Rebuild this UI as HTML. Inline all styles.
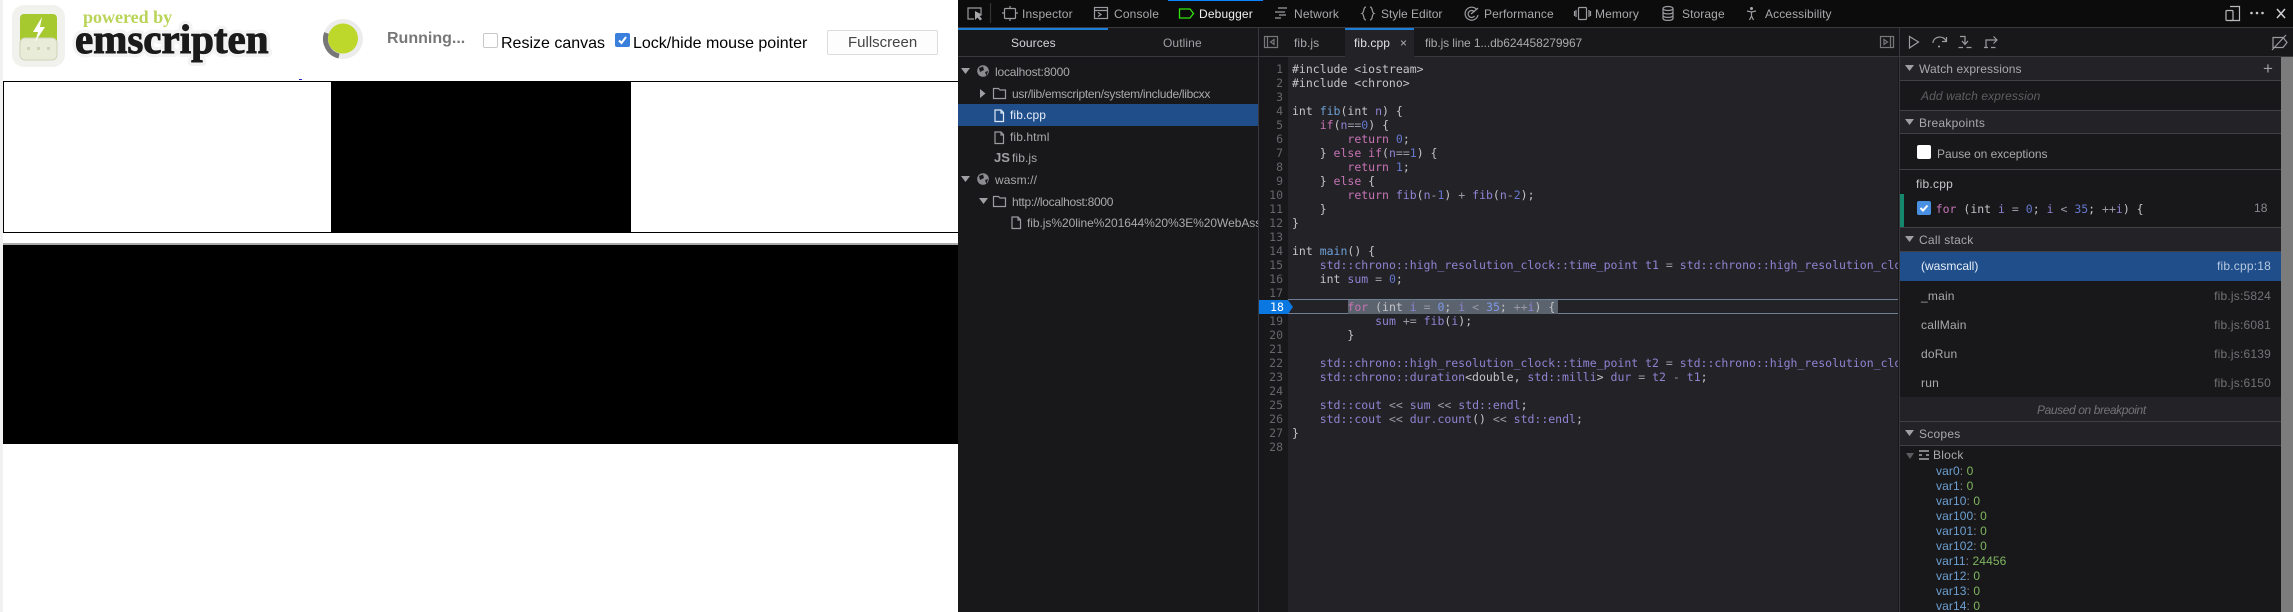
<!DOCTYPE html>
<html><head><meta charset="utf-8"><style>
html,body{margin:0;padding:0;width:2293px;height:612px;overflow:hidden;background:#fff}
body{position:relative;font-family:"Liberation Sans",sans-serif;filter:blur(.3px)}
.b{position:absolute}
.t{position:absolute;white-space:pre;font-size:12px;line-height:16px;color:#a9a9ac;letter-spacing:.1px}
.m{font-family:"DejaVu Sans Mono","Liberation Mono",monospace;font-size:11.5px}
#code{position:absolute;left:1292px;top:62px;width:606px;height:550px;overflow:hidden}
#code div{height:14px;line-height:14px;white-space:pre;font-family:"DejaVu Sans Mono","Liberation Mono",monospace;font-size:11.5px;color:#c4c4c8}
#nums{position:absolute;left:1259px;top:62px;width:24px;text-align:right;color:#66666b}
#nums div{height:14px;line-height:14px;font-family:"DejaVu Sans Mono","Liberation Mono",monospace;font-size:11.5px}
.k{color:#c673b4}.v{color:#8f83d2}.n{color:#6476cc}.o{color:#9a9aa6}.f{color:#6f9fd6}.c{color:#858589}
.vn{color:#6d9fd0}.vv{color:#7fb560}
</style></head><body>
<!-- left page -->
<div class="b" style="left:0;top:0;width:3px;height:612px;background:#f1f1f1"></div>
<div class="b" style="left:3px;top:81px;width:955px;height:152px;box-sizing:border-box;border:1px solid #000;border-right:0;background:#fff"></div>
<div class="b" style="left:331px;top:81px;width:300px;height:151px;background:#000"></div>
<div class="b" style="left:3px;top:243px;width:955px;height:2px;background:#aaa"></div>
<div class="b" style="left:3px;top:245px;width:955px;height:199px;background:#000"></div>
<div class="b" style="left:299px;top:79px;width:3px;height:1px;background:#22c"></div>
<svg class="b" style="left:0;top:0" width="958" height="80" viewBox="0 0 958 80">
<rect x="12" y="5" width="53" height="62" rx="12" fill="#f1f1ee"/>
<rect x="20" y="14" width="37" height="32" rx="4" fill="#a6c92f"/>
<rect x="20" y="38" width="37" height="22" rx="5" fill="#e9ecd8" stroke="#cfd4b8"/>
<path d="M27 47h3v3h-3zM37 47h3v3h-3zM47 47h3v3h-3z" fill="#cfd4b8"/>
<path d="M42 17 L33 32 L38 32 L35 42 L45 27 L40 27 Z" fill="#fff"/>
<text aria-hidden="true" x="75" y="53" font-family="Liberation Serif" font-weight="bold" font-size="41" fill="#f3f3f3" stroke="#f3f3f3" stroke-width="8" stroke-linejoin="round">emscripten</text>
<text x="75" y="53" font-family="Liberation Serif" font-weight="bold" font-size="41" fill="#1a1a1a" stroke="#1a1a1a" stroke-width="1">emscripten</text>
<text x="83" y="23" font-family="Liberation Serif" font-weight="bold" font-size="18" fill="#b9d458">powered by</text>
<circle cx="343" cy="39" r="20" fill="#ececec"/>
<path d="M326.500 33 A17.500 17.500 0 0 0 339 56" fill="none" stroke="#777" stroke-width="5"/>
<circle cx="343" cy="38.500" r="15" fill="#bdd82a"/>
</svg>
<div class="t" style="left:387px;top:29px;font-size:16px;line-height:20px;font-weight:bold;color:#787878;letter-spacing:0">Running...</div>
<div class="b" style="left:483px;top:33px;width:13px;height:13px;border:1px solid #c8c8c8;border-radius:2px;background:#fff"></div>
<div class="t" style="left:501px;top:34px;font-size:16px;line-height:20px;color:#000;letter-spacing:0">Resize canvas</div>
<svg class="b" style="left:615px;top:33px" width="15" height="14"><rect width="15" height="14" rx="2" fill="#3b7fdd"/><path d="M4 7.500l2.500 2.500 4.500-6" fill="none" stroke="#fff" stroke-width="2"/></svg>
<div class="t" style="left:633px;top:34px;font-size:16px;line-height:20px;color:#000;letter-spacing:0">Lock/hide mouse pointer</div>
<div class="b" style="left:827px;top:30px;width:109px;height:23px;border:1px solid #dcdcdc;border-radius:2px;background:#fdfdfd"></div>
<div class="t" style="left:848px;top:33px;font-size:15px;line-height:20px;color:#444;letter-spacing:0">Fullscreen</div>

<!-- devtools -->
<div class="b" style="left:958px;top:0;width:1335px;height:612px;background:#18181a"></div>
<div class="b" style="left:958px;top:0;width:1335px;height:27px;background:#0c0c0d;border-bottom:1px solid #38383d;box-sizing:content-box"></div>
<div class="b" style="left:1168px;top:0;width:95px;height:1px;background:#0a84ff"></div>
<div class="b" style="left:958px;top:28px;width:150px;height:2px;background:#1c7ed6"></div>
<div class="b" style="left:958px;top:56px;width:1335px;height:1px;background:#38383d"></div>
<div class="b" style="left:1258px;top:28px;width:1px;height:584px;background:#38383d"></div>
<div class="b" style="left:1899px;top:28px;width:1px;height:584px;background:#38383d"></div>
<!-- editor -->
<div class="b" style="left:1288px;top:57px;width:610px;height:555px;background:#232327"></div>
<div class="b" style="left:1345px;top:28px;width:69px;height:29px;background:#232327"></div>
<div class="b" style="left:1345px;top:28px;width:69px;height:2px;background:#1c7ed6"></div>
<!-- sidebar select -->
<div class="b" style="left:958px;top:104px;width:300px;height:22px;background:#204e8a"></div>
<!-- line 18 -->
<div class="b" style="left:1288px;top:299px;width:610px;height:15px;border-top:1px solid #6f7f96;border-bottom:1px solid #6f7f96;box-sizing:border-box"></div>
<div class="b" style="left:1348px;top:300px;width:210px;height:14px;background:#5b636e"></div>
<!-- right panel sections -->
<div class="b" style="left:1900px;top:57px;width:381px;height:23px;background:#232327"></div>
<div class="b" style="left:1900px;top:80px;width:381px;height:1px;background:#404045"></div>
<div class="b" style="left:1900px;top:110px;width:381px;height:24px;background:#232327;border-top:1px solid #404045;border-bottom:1px solid #404045;box-sizing:border-box"></div>
<div class="b" style="left:1900px;top:169px;width:381px;height:1px;background:#404045"></div>
<div class="b" style="left:1900px;top:194px;width:4px;height:33px;background:#14886c"></div>
<div class="b" style="left:1900px;top:227px;width:381px;height:25px;background:#232327;border-top:1px solid #404045;border-bottom:1px solid #404045;box-sizing:border-box"></div>
<div class="b" style="left:1900px;top:252px;width:381px;height:29px;background:#204e8a"></div>
<div class="b" style="left:1900px;top:397px;width:381px;height:24px;background:#232327"></div>
<div class="b" style="left:1900px;top:421px;width:381px;height:25px;background:#232327;border-top:1px solid #404045;border-bottom:1px solid #404045;box-sizing:border-box"></div>
<div class="b" style="left:2281px;top:57px;width:12px;height:555px;background:#7c7c7c"></div>

<!-- toolbar text -->
<div class="t" style="left:1022px;top:6px;letter-spacing:.15px">Inspector</div>
<div class="t" style="left:1114px;top:6px;letter-spacing:.15px">Console</div>
<div class="t" style="left:1199px;top:6px;color:#f0f0f2;letter-spacing:.15px">Debugger</div>
<div class="t" style="left:1294px;top:6px;letter-spacing:.15px">Network</div>
<div class="t" style="left:1381px;top:6px;letter-spacing:0">Style Editor</div>
<div class="t" style="left:1484px;top:6px;letter-spacing:.1px">Performance</div>
<div class="t" style="left:1595px;top:6px;letter-spacing:.1px">Memory</div>
<div class="t" style="left:1682px;top:6px;letter-spacing:.1px">Storage</div>
<div class="t" style="left:1765px;top:6px;letter-spacing:.1px">Accessibility</div>
<div class="t" style="left:1011px;top:35px;color:#d7d7db">Sources</div>
<div class="t" style="left:1163px;top:35px;color:#a0a0a4">Outline</div>
<div class="t" style="left:1294px;top:35px">fib.js</div>
<div class="t" style="left:1354px;top:35px;color:#e0e0e4">fib.cpp</div>
<div class="t" style="left:1400px;top:35px;color:#b1b1b3">×</div>
<div class="t" style="left:1425px;top:35px;letter-spacing:-.1px">fib.js line 1...db624458279967</div>

<!-- tree -->
<div class="t" style="left:995px;top:64px;letter-spacing:-.2px">localhost:8000</div>
<div class="t" style="left:1012px;top:86px;letter-spacing:-.3px">usr/lib/emscripten/system/include/libcxx</div>
<div class="t" style="left:1010px;top:107px;color:#e6eef8">fib.cpp</div>
<div class="t" style="left:1010px;top:129px">fib.html</div>
<div class="t" style="left:994px;top:150px;font-weight:bold;font-size:13px;letter-spacing:0;color:#a0a0a4">JS</div>
<div class="t" style="left:1012px;top:150px">fib.js</div>
<div class="t" style="left:995px;top:172px">wasm://</div>
<div class="t" style="left:1012px;top:194px;letter-spacing:-.3px">http://localhost:8000</div>
<div class="b" style="left:1027px;top:215px;width:231px;height:16px;overflow:hidden"><div class="t" style="left:0;top:0;letter-spacing:-.05px">fib.js%20line%201644%20%3E%20WebAssembly.instantiate</div></div>

<!-- gutter numbers -->
<div id="nums"><div>1</div><div>2</div><div>3</div><div>4</div><div>5</div><div>6</div><div>7</div><div>8</div><div>9</div><div>10</div><div>11</div><div>12</div><div>13</div><div>14</div><div>15</div><div>16</div><div>17</div><div style="color:transparent">18</div><div>19</div><div>20</div><div>21</div><div>22</div><div>23</div><div>24</div><div>25</div><div>26</div><div>27</div><div>28</div></div>
<svg class="b" style="left:1258px;top:300px" width="36" height="14"><path d="M1 0H30L35 7L30 14H1Z" fill="#0a78e0"/></svg>
<div class="t m" style="left:1270px;top:299px;color:#fff;line-height:16px">18</div>

<div id="code">
<div class="c">#include &lt;iostream&gt;</div>
<div class="c">#include &lt;chrono&gt;</div>
<div> </div>
<div>int <span class="f">fib</span>(int <span class="v">n</span>) {</div>
<div>    <span class="k">if</span>(<span class="v">n</span><span class="o">==</span><span class="n">0</span>) {</div>
<div>        <span class="k">return</span> <span class="n">0</span>;</div>
<div>    } <span class="k">else if</span>(<span class="v">n</span><span class="o">==</span><span class="n">1</span>) {</div>
<div>        <span class="k">return</span> <span class="n">1</span>;</div>
<div>    } <span class="k">else</span> {</div>
<div>        <span class="k">return</span> <span class="v">fib</span>(<span class="v">n</span><span class="o">-</span><span class="n">1</span>) <span class="o">+</span> <span class="v">fib</span>(<span class="v">n</span><span class="o">-</span><span class="n">2</span>);</div>
<div>    }</div>
<div>}</div>
<div> </div>
<div>int <span class="f">main</span>() {</div>
<div>    <span class="v">std::chrono::high_resolution_clock::time_point t1</span> <span class="o">=</span> <span class="v">std::chrono::high_resolution_clock::now</span>();</div>
<div>    int <span class="v">sum</span> <span class="o">=</span> <span class="n">0</span>;</div>
<div> </div>
<div>        <span class="k">for</span> (int <span class="v">i</span> <span class="o">=</span> <span class="n" style="color:#7f97e6">0</span>; <span class="v">i</span> <span class="o">&lt;</span> <span class="n" style="color:#7f97e6">35</span>; <span class="o">++</span><span class="v">i</span>) {</div>
<div>            <span class="v">sum</span> <span class="o">+=</span> <span class="v">fib</span>(<span class="v">i</span>);</div>
<div>        }</div>
<div> </div>
<div>    <span class="v">std::chrono::high_resolution_clock::time_point t2</span> <span class="o">=</span> <span class="v">std::chrono::high_resolution_clock::now</span>();</div>
<div>    <span class="v">std::chrono::duration</span>&lt;double, <span class="v">std::milli</span>&gt; <span class="v">dur</span> <span class="o">=</span> <span class="v">t2</span> <span class="o">-</span> <span class="v">t1</span>;</div>
<div> </div>
<div>    <span class="v">std::cout</span> <span class="o">&lt;&lt;</span> <span class="v">sum</span> <span class="o">&lt;&lt;</span> <span class="v">std::endl</span>;</div>
<div>    <span class="v">std::cout</span> <span class="o">&lt;&lt;</span> <span class="v">dur.count</span>() <span class="o">&lt;&lt;</span> <span class="v">std::endl</span>;</div>
<div>}</div>
</div>

<!-- right panel text -->
<div class="t" style="left:1919px;top:61px;letter-spacing:.1px">Watch expressions</div>
<div class="t" style="left:2263px;top:61px;font-size:17px;color:#a0a0a4">+</div>
<div class="t" style="left:1921px;top:88px;font-style:italic;color:#5f5f63;letter-spacing:.1px">Add watch expression</div>
<div class="t" style="left:1919px;top:115px;letter-spacing:.25px">Breakpoints</div>
<div class="b" style="left:1917px;top:145px;width:14px;height:14px;border-radius:2px;background:#fff"></div>
<div class="t" style="left:1937px;top:146px;letter-spacing:-.05px">Pause on exceptions</div>
<div class="t" style="left:1916px;top:176px;color:#c8c8cc;letter-spacing:.25px">fib.cpp</div>
<svg class="b" style="left:1917px;top:201px" width="14" height="14"><rect width="14" height="14" rx="2" fill="#4a90e2"/><path d="M3.500 7l2.500 2.500 4.500-5" fill="none" stroke="#fff" stroke-width="2"/></svg>
<div class="t m" style="left:1935.700px;top:201px;color:#c4c4c8;letter-spacing:0"><span class="k">for</span> (int <span class="v">i</span> <span class="o">=</span> <span class="n">0</span>; <span class="v">i</span> <span class="o">&lt;</span> <span class="n">35</span>; <span class="o">++</span><span class="v">i</span>) {</div>
<div class="t" style="left:2254px;top:200px;color:#8a8a8e">18</div>
<div class="t" style="left:1919px;top:232px;letter-spacing:.25px">Call stack</div>
<div class="t" style="left:1921px;top:258px;color:#e6eef8;letter-spacing:0">(wasmcall)</div>
<div class="t" style="right:22px;top:258px;color:#b6c8e0;letter-spacing:.2px">fib.cpp:18</div>
<div class="t" style="left:1921px;top:288px;letter-spacing:.2px">_main</div>
<div class="t" style="right:22px;top:288px;color:#737377;letter-spacing:.2px">fib.js:5824</div>
<div class="t" style="left:1921px;top:317px;letter-spacing:.2px">callMain</div>
<div class="t" style="right:22px;top:317px;color:#737377;letter-spacing:.2px">fib.js:6081</div>
<div class="t" style="left:1921px;top:346px;letter-spacing:.2px">doRun</div>
<div class="t" style="right:22px;top:346px;color:#737377;letter-spacing:.2px">fib.js:6139</div>
<div class="t" style="left:1921px;top:375px;letter-spacing:.2px">run</div>
<div class="t" style="right:22px;top:375px;color:#737377;letter-spacing:.2px">fib.js:6150</div>
<div class="t" style="left:2037px;top:402px;font-style:italic;color:#737377;letter-spacing:-.4px">Paused on breakpoint</div>
<div class="t" style="left:1919px;top:426px;letter-spacing:.25px">Scopes</div>
<div class="t" style="left:1933px;top:447px;letter-spacing:.25px">Block</div>
<div class="t" style="left:1936px;top:463px"><span class="vn">var0</span><span style="color:#8a8a8e">: </span><span class="vv">0</span></div>
<div class="t" style="left:1936px;top:478px"><span class="vn">var1</span><span style="color:#8a8a8e">: </span><span class="vv">0</span></div>
<div class="t" style="left:1936px;top:493px"><span class="vn">var10</span><span style="color:#8a8a8e">: </span><span class="vv">0</span></div>
<div class="t" style="left:1936px;top:508px"><span class="vn">var100</span><span style="color:#8a8a8e">: </span><span class="vv">0</span></div>
<div class="t" style="left:1936px;top:523px"><span class="vn">var101</span><span style="color:#8a8a8e">: </span><span class="vv">0</span></div>
<div class="t" style="left:1936px;top:538px"><span class="vn">var102</span><span style="color:#8a8a8e">: </span><span class="vv">0</span></div>
<div class="t" style="left:1936px;top:553px"><span class="vn">var11</span><span style="color:#8a8a8e">: </span><span class="vv">24456</span></div>
<div class="t" style="left:1936px;top:568px"><span class="vn">var12</span><span style="color:#8a8a8e">: </span><span class="vv">0</span></div>
<div class="t" style="left:1936px;top:583px"><span class="vn">var13</span><span style="color:#8a8a8e">: </span><span class="vv">0</span></div>
<div class="t" style="left:1936px;top:598px"><span class="vn">var14</span><span style="color:#8a8a8e">: </span><span class="vv">0</span></div>

<!-- icons -->
<svg class="b" style="left:0;top:0;pointer-events:none" width="2293" height="612" viewBox="0 0 2293 612" fill="none" stroke="#9c9ca0" stroke-width="1.200">
<!-- pick -->
<path d="M974 19H968V8H981V14"/><path d="M975 11L975 20L977.500 17.500L980 20.500L982 19L979.500 16L982.500 15Z" fill="#a8a8ac" stroke="none"/>
<path d="M990.500 3V23" stroke="#333"/>
<!-- inspector -->
<rect x="1004.500" y="8.500" width="11" height="10" rx="1"/><path d="M1010 6V8M1010 19V21M1002 13H1004M1016 13H1018"/>
<!-- console -->
<rect x="1094.500" y="7.500" width="13" height="11"/><path d="M1094.500 10.500H1107.500M1098 12.500L1101 14.500L1098 16.500"/>
<!-- debugger -->
<path d="M1179.500 9H1190L1193.500 13.500L1190 18H1179.500Z" stroke="#30e60b" stroke-width="1.300"/>
<!-- network -->
<path d="M1278 8H1287M1275 12H1285M1279 15H1286M1275 18H1281"/>
<!-- style editor -->
<path d="M1366 7C1363 7 1364.500 12.500 1362 13.500C1364.500 14.500 1363 20 1366 20M1370 7C1373 7 1371.500 12.500 1374 13.500C1371.500 14.500 1373 20 1370 20"/>
<!-- performance -->
<path d="M1477 10A6.500 6.500 0 1 0 1478 15"/><path d="M1474.500 12A3.500 3.500 0 1 0 1474.500 16"/><path d="M1471 14L1478 8"/>
<!-- memory -->
<rect x="1578.500" y="7.500" width="8" height="12" rx="1"/><path d="M1576 10V17M1574.500 11V16M1589 10V17M1590.500 11V16"/>
<!-- storage -->
<ellipse cx="1668" cy="8.500" rx="5" ry="2"/><path d="M1663 8.500V18.500C1663 21 1673 21 1673 18.500V8.500M1663 12C1663 14.500 1673 14.500 1673 12M1663 15.500C1663 18 1673 18 1673 15.500"/>
<!-- accessibility -->
<circle cx="1751.500" cy="8.500" r="1.500" fill="#a8a8ac" stroke="none"/><path d="M1747 11L1751.500 12L1756 11M1751.500 12V16M1749.500 20L1751.500 16L1753.500 20"/>
<!-- responsive -->
<path d="M2230 6.500H2239.500V20.500H2230" stroke="#b8b8bc"/><rect x="2226" y="10.500" width="7" height="10" rx="1" stroke="#b8b8bc"/>
<!-- dots -->
<circle cx="2251.500" cy="13" r="1.300" fill="#c8c8cc" stroke="none"/><circle cx="2257" cy="13" r="1.300" fill="#c8c8cc" stroke="none"/><circle cx="2262.500" cy="13" r="1.300" fill="#c8c8cc" stroke="none"/>
<!-- close -->
<path d="M2277 9L2285 18M2285 9L2277 18" stroke="#d0d0d4" stroke-width="1.500"/>
<!-- toggle panes -->
<rect x="1264.500" y="36.500" width="13" height="11" stroke="#77777b"/><path d="M1267.500 36.500V47.500M1274 39.500L1270.500 42L1274 44.500Z" stroke="#77777b"/>
<rect x="1880.500" y="36.500" width="13" height="11" stroke="#77777b"/><path d="M1890.500 36.500V47.500M1884 39.500L1887.500 42L1884 44.500Z" stroke="#77777b"/>
<!-- tree arrows -->
<g fill="#a0a0a4" stroke="none"><path d="M961 68H970L965.500 74Z"/><path d="M980 89L985.500 93.500L980 98Z"/><path d="M961 176H970L965.500 182Z"/><path d="M979 198H988L983.500 204Z"/></g>
<!-- globes -->
<g fill="#8c8c90" stroke="none"><circle cx="983" cy="71" r="5.800"/><circle cx="983" cy="179" r="5.800"/></g>
<g fill="#18181a" stroke="none"><path d="M979 68L983 66.500L984 70L980 72Z"/><path d="M985 72L988 71L986.500 76Z"/><path d="M979 176L983 174.500L984 178L980 180Z"/><path d="M985 180L988 179L986.500 184Z"/></g>
<!-- folders -->
<path d="M993.500 88.500H998.500L1000 90H1005.500V98.500H993.500Z"/><path d="M993.500 196.500H998.500L1000 198H1005.500V206.500H993.500Z"/>
<!-- files -->
<path d="M995 110H1001L1003.500 112.500V121.500H995ZM1001 110V113H1003.500" stroke="#dfe8f4"/>
<path d="M995 132H1001L1003.500 134.500V143.500H995ZM1001 132V135H1003.500"/>
<path d="M1012 217H1018L1020.500 219.500V228.500H1012ZM1018 217V220H1020.500"/>
<!-- debugger controls -->
<path d="M1909.500 36.500L1918.500 42L1909.500 48Z"/>
<path d="M1933 43C1933 36 1944 35 1946 41M1946.500 37V41.500H1942"/><circle cx="1939" cy="46.500" r="1" fill="#a8a8ac" stroke="none"/>
<path d="M1960 36.500H1965V44M1962 41L1965 44.500L1968 41M1958.500 47.500H1963M1966.500 47.500H1971.500"/>
<path d="M1986 47V40H1997M1993.500 36.500L1997 40L1993.500 43.500M1984 47.500H1988M1991 47.500H1995.500"/>
<path d="M2273 37.500H2283L2287 42.500L2283 47.500H2273ZM2272 50L2286 35"/>
<!-- section arrows -->
<g fill="#a0a0a4" stroke="none"><path d="M1905 65H1914L1909.500 71Z"/><path d="M1905 119H1914L1909.500 125Z"/><path d="M1905 236H1914L1909.500 242Z"/><path d="M1905 430H1914L1909.500 436Z"/><path d="M1906 453H1914L1910 459Z" fill="#5c5c60"/></g>
<!-- block icon -->
<path d="M1919 451H1929M1919 455H1922M1926 455H1929M1919 459H1929" stroke="#c4c4c8"/>
</svg>
</body></html>
